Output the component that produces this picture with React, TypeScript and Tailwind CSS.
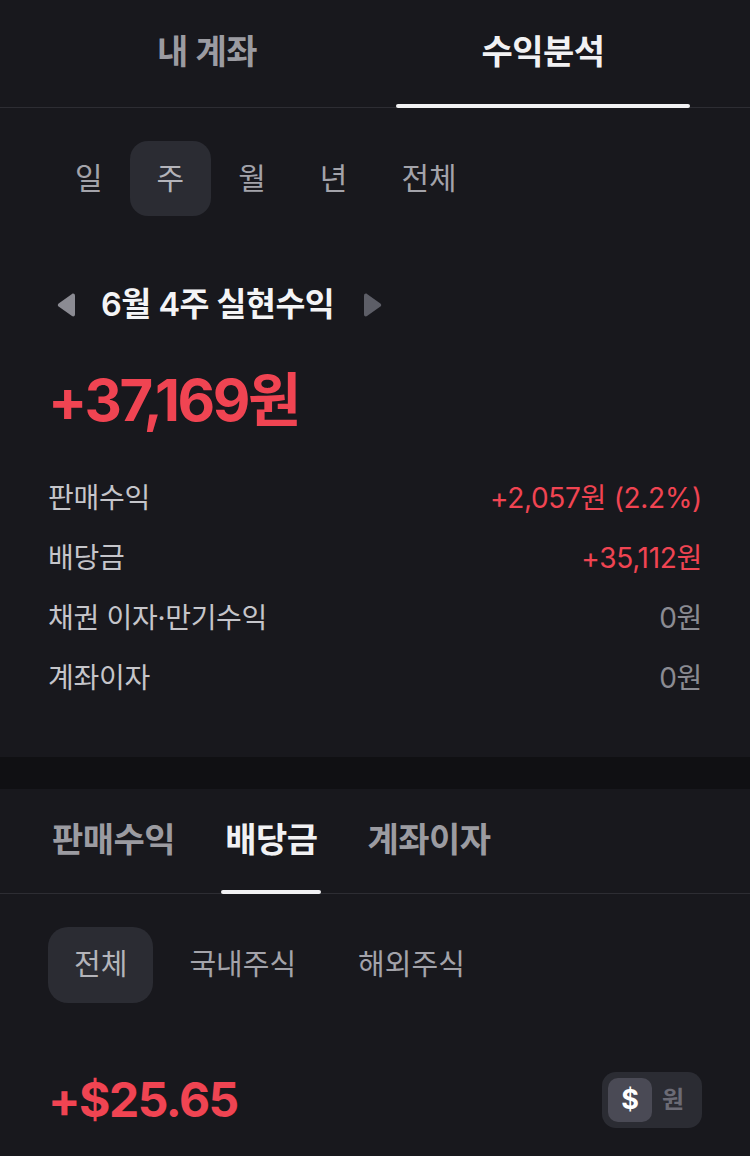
import { useState } from 'react';

const FONT = { fontFamily: 'Inter, "Noto Sans CJK KR", sans-serif' };

const periods = ['일', '주', '월', '년', '전체'];

const rows = [
  { label: '판매수익', value: '+2,057원 (2.2%)', red: true },
  { label: '배당금', value: '+35,112원', red: true },
  { label: '채권 이자·만기수익', value: '0원', red: false },
  { label: '계좌이자', value: '0원', red: false },
];

const Triangle = ({ dir, color }: { dir: 'left' | 'right'; color: string }) => (
  <svg width="24" height="26" viewBox="0 0 24 26">
    {dir === 'left' ? (
      <path d="M20 3.5v19c0 1.6-1.7 2.5-3 1.6L3.6 14.6a2 2 0 0 1 0-3.2L17 1.9c1.3-.9 3 0 3 1.6z" fill={color} />
    ) : (
      <path d="M4 3.5v19c0 1.6 1.7 2.5 3 1.6l13.4-9.5a2 2 0 0 0 0-3.2L7 1.9c-1.3-.9-3 0-3 1.6z" fill={color} />
    )}
  </svg>
);

const App = () => {
  const [topTab, setTopTab] = useState(1);
  const [period, setPeriod] = useState(1);
  const [subTab, setSubTab] = useState(1);
  const [market, setMarket] = useState(0);
  const [usd, setUsd] = useState(true);

  return (
    <div className="min-h-screen w-[750px] bg-[#18181d] text-white" style={FONT}>
      {/* top tabs */}
      <div className="flex h-[108px] border-b border-[#2d2d33] px-[39px]">
        {['내 계좌', '수익분석'].map((t, i) => (
          <button
            key={t}
            onClick={() => setTopTab(i)}
            className="flex flex-1 flex-col"
          >
            <span
              className={`flex flex-1 items-center justify-center text-[34px] font-bold tracking-[-0.5px] ${
                topTab === i ? 'text-[#f1f1f3]' : 'text-[#9b9ba1]'
              }`}
            >
              {t}
            </span>
            <span
              className={`mx-[21px] h-[4px] translate-y-[1px] rounded-full ${
                topTab === i ? 'bg-[#f1f1f3]' : 'bg-transparent'
              }`}
            ></span>
          </button>
        ))}
      </div>

      <div className="px-[48px] pb-[49px]">
        {/* period */}
        <div className="mt-[33px] flex">
          {periods.map((p, i) => (
            <button
              key={p}
              onClick={() => setPeriod(i)}
              className={`flex h-[75px] items-center rounded-[18px] px-[27px] text-[30px] ${
                period === i ? 'bg-[#2b2c33] text-[#b4b4ba]' : 'text-[#a3a3aa]'
              }`}
            >
              {p}
            </button>
          ))}
        </div>

        {/* title */}
        <div className="mt-[69px] flex h-[40px] items-center">
          <div className="ml-[7px]">
            <Triangle dir="left" color="#8b8b93" />
          </div>
          <span className="ml-[22px] text-[32.5px] font-semibold tracking-[-0.5px] text-[#f4f4f6]">
            6월 4주 실현수익
          </span>
          <div className="ml-[26px]">
            <Triangle dir="right" color="#5d5e67" />
          </div>
        </div>

        {/* amount */}
        <div className="mt-[46px] text-[58px] font-bold leading-none tracking-[-2.5px] text-[#f04452]">
          +37,169원
        </div>

        {/* rows */}
        <div className="mt-[39px] flex flex-col">
          {rows.map((r) => (
            <div key={r.label} className="flex h-[60px] items-center justify-between text-[28px] tracking-[-0.3px]">
              <span className="text-[#c5c5ca]">{r.label}</span>
              <span className={r.red ? 'text-[#f04452]' : 'text-[#8b8b92]'}>{r.value}</span>
            </div>
          ))}
        </div>
      </div>

      {/* separator band */}
      <div className="h-[32px] bg-[#101013]"></div>

      {/* sub tabs */}
      <div className="flex h-[105px] border-b border-[#2d2d33] px-[52px]">
        {['판매수익', '배당금', '계좌이자'].map((t, i) => (
          <button key={t} onClick={() => setSubTab(i)} className="mr-[50px] flex flex-col">
            <span
              className={`flex flex-1 items-center justify-center text-[34px] font-bold tracking-[-0.5px] ${
                subTab === i ? 'text-[#f1f1f3]' : 'text-[#9b9ba1]'
              }`}
            >
              {t}
            </span>
            <span
              className={`-mx-[4px] h-[4px] translate-y-[1px] rounded-full ${
                subTab === i ? 'bg-[#f1f1f3]' : 'bg-transparent'
              }`}
            ></span>
          </button>
        ))}
      </div>

      <div className="px-[48px]">
        {/* market chips */}
        <div className="mt-[33px] flex gap-[10px]">
          {['전체', '국내주식', '해외주식'].map((m, i) => (
            <button
              key={m}
              onClick={() => setMarket(i)}
              className={`flex h-[76px] items-center rounded-[20px] px-[26px] text-[29px] ${
                market === i ? 'bg-[#2b2c33] text-[#b4b4ba]' : 'text-[#a3a3aa]'
              }`}
            >
              {m}
            </button>
          ))}
        </div>

        {/* dividend amount */}
        <div className="mt-[69px] flex items-center justify-between">
          <span className="text-[48px] font-bold leading-none tracking-[-1.5px] text-[#f04452]">+$25.65</span>
          <div className="flex h-[56px] items-center gap-[10px] rounded-[14px] bg-[#2b2c33] px-[6px]">
            <button
              onClick={() => setUsd(true)}
              className={`flex h-[44px] w-[44px] items-center justify-center rounded-[10px] text-[27px] font-bold ${
                usd ? 'bg-[#4a4a55] text-white' : 'text-[#6b6b75]'
              }`}
            >
              $
            </button>
            <button
              onClick={() => setUsd(false)}
              className={`flex h-[44px] w-[34px] items-center justify-start rounded-[10px] text-[24px] font-bold ${
                !usd ? 'bg-[#4a4a55] text-white' : 'text-[#6b6b75]'
              }`}
            >
              원
            </button>
          </div>
        </div>
      </div>
    </div>
  );
};

export default App;
